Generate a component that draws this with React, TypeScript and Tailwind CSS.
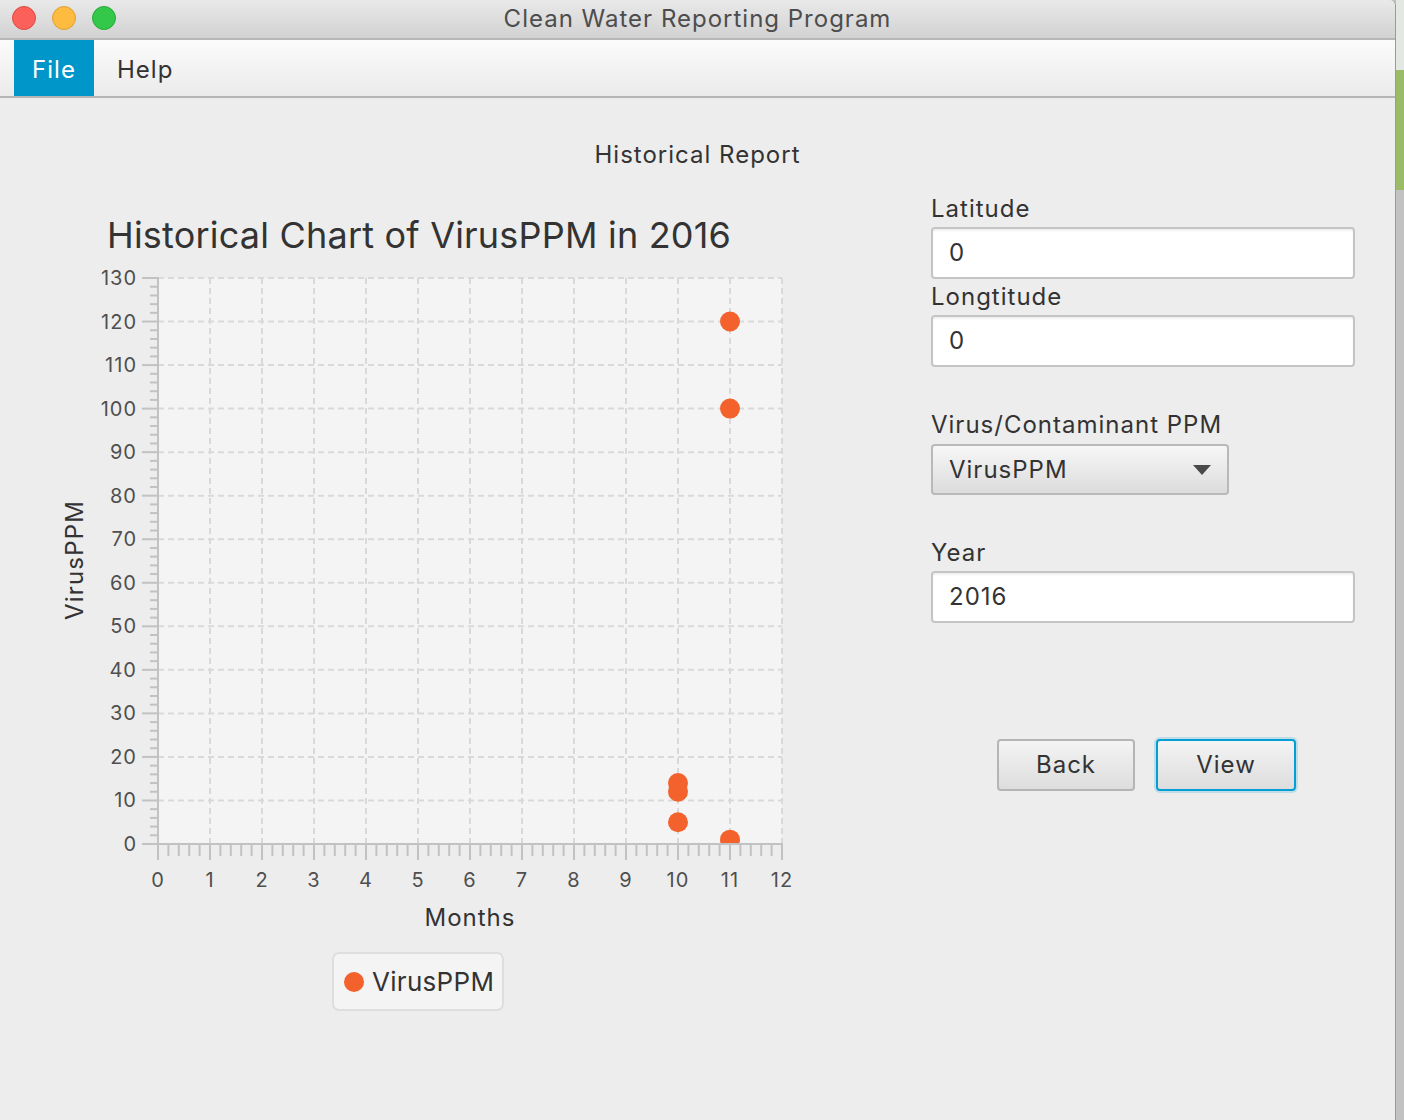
import React from "react";

const AXIS = "#c2c2c2";
const GRID = "#d9d9d9";
const DOT = "#f3622d";
const FONT = "Inter, 'Open Sans', sans-serif";

// chart geometry, in page pixels
const X0 = 158;
const X1 = 782;
const Y0 = 844;
const Y1 = 278;
const xStep = (X1 - X0) / 12;
const yStep = (Y0 - Y1) / 130;

const points: [number, number][] = [
    [11, 120],
    [11, 100],
    [10, 14],
    [10, 12],
    [10, 5],
    [11, 1],
];

function Chart() {
    const px = (m: number) => X0 + m * xStep;
    const py = (v: number) => Y0 - v * yStep;
    const months = Array.from({ length: 13 }, (_, i) => i);
    const values = Array.from({ length: 14 }, (_, i) => i * 10);
    const minorY = Array.from({ length: 66 }, (_, i) => i * 2).filter((v) => v % 10 !== 0);
    const minorX = Array.from({ length: 61 }, (_, i) => i * 0.2).filter((_, i) => i % 5 !== 0);

    return (
        <svg width={800} height={850} viewBox="40 190 800 850" fontFamily={FONT}>
            <defs>
                <clipPath id="plot">
                    <rect x={X0} y={Y1} width={X1 - X0} height={Y0 - Y1} />
                </clipPath>
            </defs>

            <text x={107} y={248} fontSize={36} fill="#333" letterSpacing={0.2}>
                Historical Chart of VirusPPM in 2016
            </text>

            {/* plot area and grid */}
            <rect x={X0} y={Y1} width={X1 - X0} height={Y0 - Y1} fill="#f4f4f4" />
            {months.slice(1).map((m) => (
                <line key={"gx" + m} x1={px(m)} x2={px(m)} y1={Y1} y2={Y0} stroke={GRID} strokeWidth={2} strokeDasharray="6 4" />
            ))}
            {values.slice(1).map((v) => (
                <line key={"gy" + v} x1={X0} x2={X1} y1={py(v)} y2={py(v)} stroke={GRID} strokeWidth={2} strokeDasharray="6 4" />
            ))}

            {/* data */}
            <g clipPath="url(#plot)">
                {points.map(([m, v], i) => (
                    <circle key={i} cx={px(m)} cy={py(v)} r={10} fill={DOT} />
                ))}
            </g>

            {/* y axis */}
            <line x1={X0} x2={X0} y1={Y1 - 1} y2={Y0 + 1} stroke={AXIS} strokeWidth={2} />
            {values.map((v) => (
                <g key={"ty" + v}>
                    <line x1={142} x2={X0} y1={py(v)} y2={py(v)} stroke={AXIS} strokeWidth={2} />
                    <text x={137} y={py(v) + 7} fontSize={20} fill="#4f4f4f" textAnchor="end" letterSpacing={1}>
                        {v}
                    </text>
                </g>
            ))}
            {minorY.map((v) => (
                <line key={"my" + v} x1={150} x2={X0} y1={py(v)} y2={py(v)} stroke={AXIS} strokeWidth={2} />
            ))}

            {/* x axis */}
            <line x1={X0 - 1} x2={X1 + 1} y1={Y0} y2={Y0} stroke={AXIS} strokeWidth={2} />
            {months.map((m) => (
                <g key={"tx" + m}>
                    <line x1={px(m)} x2={px(m)} y1={Y0} y2={860} stroke={AXIS} strokeWidth={2} />
                    <text x={px(m)} y={887} fontSize={20} fill="#4f4f4f" textAnchor="middle" letterSpacing={1}>
                        {m}
                    </text>
                </g>
            ))}
            {minorX.map((m, i) => (
                <line key={"mx" + i} x1={px(m)} x2={px(m)} y1={Y0} y2={856} stroke={AXIS} strokeWidth={2} />
            ))}

            <text x={470} y={926} fontSize={24} fill="#333" textAnchor="middle" letterSpacing={1}>
                Months
            </text>
            <text x={0} y={0} fontSize={24} fill="#333" textAnchor="middle" letterSpacing={1.2} transform="translate(83 560) rotate(-90)">
                VirusPPM
            </text>

            {/* legend */}
            <rect x={333} y={953} width={170} height={57} rx={6} fill="#f4f4f4" stroke="#dedede" strokeWidth={2} />
            <circle cx={354} cy={982} r={10} fill={DOT} />
            <text x={372} y={991} fontSize={26} fill="#333" letterSpacing={0.3}>
                VirusPPM
            </text>
        </svg>
    );
}

function TextField({ value }: { value: string }) {
    return (
        <div className="h-[52px] w-full rounded-[4px] border-2 border-[#c4c4c4] bg-white shadow-[inset_0_2px_2px_rgba(0,0,0,0.06)] flex items-center pl-[16px] text-[24px] text-[#333]">
            {value}
        </div>
    );
}

function Label({ children }: { children: React.ReactNode }) {
    return <div className="h-[30px] leading-[30px] text-[24px] text-[#333] mb-[3px]">{children}</div>;
}

export default function App() {
    return (
        <div className="flex w-[1404px] h-[1120px] font-[Inter,'Open_Sans',sans-serif] tracking-[1px] bg-[#c0c0c0]">
            <div className="flex flex-col w-[1396px] h-full bg-[#ededed] border-r border-[#9a9a9a] rounded-tr-[6px] overflow-hidden">
                {/* title bar */}
                <div className="relative h-[40px] bg-gradient-to-b from-[#e9e9e9] to-[#d2d2d2] border-b-2 border-[#b6b6b6] flex items-center justify-center">
                    <div className="absolute left-[12px] top-[6px] flex gap-[16px]">
                        <div className="w-[24px] h-[24px] rounded-full bg-[#fc605b] border border-[#de4a43]" />
                        <div className="w-[24px] h-[24px] rounded-full bg-[#fdbc40] border border-[#de9f34]" />
                        <div className="w-[24px] h-[24px] rounded-full bg-[#34c84a] border border-[#27aa35]" />
                    </div>
                    <div className="text-[24px] text-[#4d4d4d] leading-none">Clean Water Reporting Program</div>
                </div>

                {/* menu bar */}
                <div className="h-[58px] bg-gradient-to-b from-[#fbfbfb] to-[#ebebeb] border-b-2 border-[#b5b5b5] flex items-stretch pl-[14px]">
                    <div className="w-[80px] bg-[#0096c9] text-white text-[24px] flex items-center justify-center pt-[3px]">File</div>
                    <div className="px-[23px] text-[24px] text-[#333] flex items-center pt-[3px]">Help</div>
                </div>

                {/* content */}
                <div className="flex-1 flex flex-col">
                    <div className="pt-[42px] h-[30px] box-content leading-[30px] text-center text-[24px] text-[#333]">Historical Report</div>
                    <div className="flex mt-[20px]">
                        <div className="ml-[40px]">
                            <Chart />
                        </div>
                        <div className="ml-[91px] w-[424px] mt-[4px] flex flex-col">
                            <Label>Latitude</Label>
                            <TextField value="0" />
                            <div className="mt-[3px]">
                                <Label>Longtitude</Label>
                            </div>
                            <TextField value="0" />
                            <div className="mt-[43px]">
                                <Label>Virus/Contaminant PPM</Label>
                            </div>
                            <div className="mt-[1px] w-[298px] h-[51px] rounded-[4px] border-2 border-[#b9b9b9] bg-gradient-to-b from-[#f7f7f7] to-[#dcdcdc] flex items-center justify-between pl-[16px] pr-[16px] text-[24px] text-[#333]">
                                <span>VirusPPM</span>
                                <svg width="18" height="10" viewBox="0 0 18 10">
                                    <path d="M0 0 L18 0 L9 10 Z" fill="#4a4a4a" />
                                </svg>
                            </div>
                            <div className="mt-[43px]">
                                <Label>Year</Label>
                            </div>
                            <TextField value="2016" />
                            <div className="mt-[116px] flex gap-[21px] pl-[66px]">
                                <div className="w-[138px] h-[52px] rounded-[4px] border-2 border-[#b5b5b5] bg-gradient-to-b from-[#f4f4f4] to-[#dddddd] flex items-center justify-center text-[24px] text-[#333]">
                                    Back
                                </div>
                                <div className="w-[140px] h-[52px] rounded-[4px] border-2 border-[#039ed3] shadow-[0_0_0_2px_rgba(3,158,211,0.2)] bg-gradient-to-b from-[#f4f4f4] to-[#dddddd] flex items-center justify-center text-[24px] text-[#333]">
                                    View
                                </div>
                            </div>
                        </div>
                    </div>
                </div>
            </div>

            {/* sliver of what lies behind the window */}
            <div className="flex flex-col w-[8px] h-full">
                <div className="h-[70px] bg-[#e4e8e2]" />
                <div className="h-[120px] bg-[#9cbb68]" />
                <div className="flex-1 bg-[#c2c2c2]" />
            </div>
        </div>
    );
}
